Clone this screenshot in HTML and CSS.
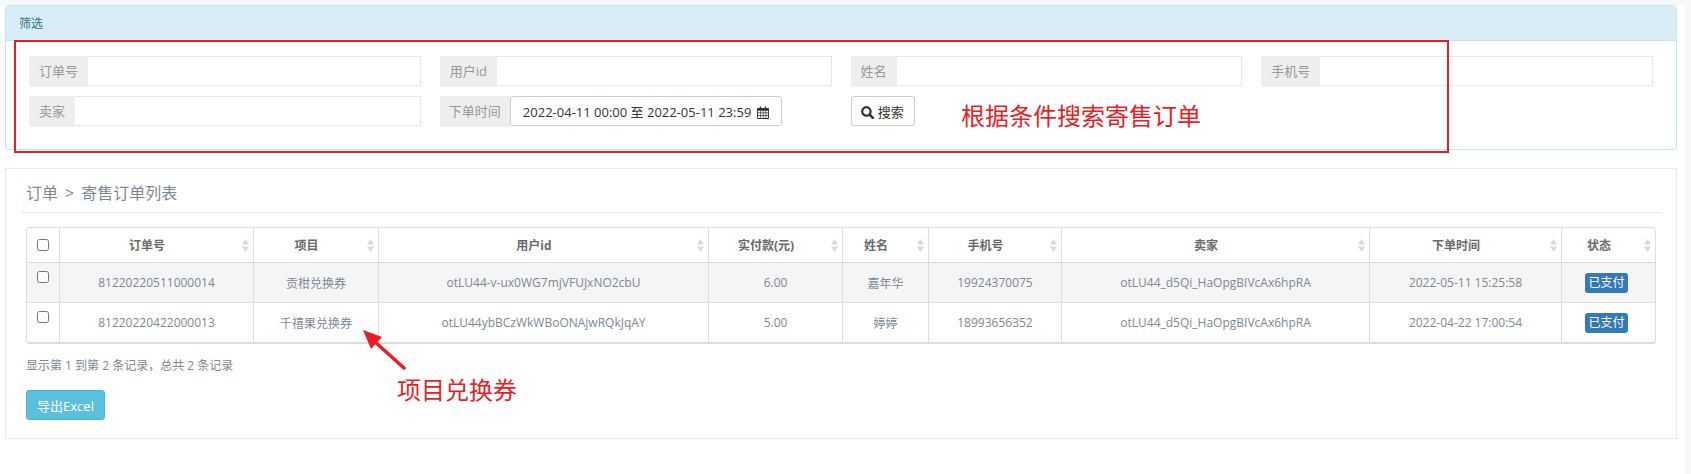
FILE: index.html
```html
<!DOCTYPE html>
<html lang="zh-CN">
<head>
    <meta charset="UTF-8">
    <title>寄售订单列表</title>
    <link rel="stylesheet" href="styles.css">
</head>
<body>

<div class="page">
    <div class="filter-panel">
        <div class="filter-heading">筛选</div>
        <div class="filter-body">
            <div class="filter-grid">
                <div class="field"><span class="field-label">订单号</span><input class="field-input" type="text"></div>
                <div class="field"><span class="field-label">用户id</span><input class="field-input" type="text"></div>
                <div class="field"><span class="field-label">姓名</span><input class="field-input" type="text"></div>
                <div class="field"><span class="field-label">手机号</span><input class="field-input" type="text"></div>
                <div class="field"><span class="field-label">卖家</span><input class="field-input" type="text"></div>
                <div class="field">
                    <span class="field-label field-label-time">下单时间</span>
                    <button class="date-btn" type="button">2022-04-11 00:00 至 2022-05-11 23:59
                        <svg class="icon-calendar" viewBox="0 0 13 14"><path d="M3 0.5h1.5v2.5h-1.5zM8.5 0.5h1.5v2.5h-1.5z" fill="#333"/><path d="M1 2h11a1 1 0 0 1 1 1v10a1 1 0 0 1-1 1h-11a1 1 0 0 1-1-1v-10a1 1 0 0 1 1-1z" fill="#333"/><path d="M1 5h2.3v2h-2.3zM4 5h2.3v2h-2.3zM7 5h2.3v2h-2.3zM10 5h2v2h-2zM1 7.7h2.3v2h-2.3zM4 7.7h2.3v2h-2.3zM7 7.7h2.3v2h-2.3zM10 7.7h2v2h-2zM1 10.4h2.3v2.6h-2.3zM4 10.4h2.3v2.6h-2.3zM7 10.4h2.3v2.6h-2.3zM10 10.4h2v2.6h-2z" fill="#fff"/></svg>
                    </button>
                </div>
                <div class="field">
                    <button class="search-btn" type="button">
                        <svg class="icon-search" viewBox="0 0 13 13"><circle cx="5.4" cy="5.4" r="4.2" fill="none" stroke="#333" stroke-width="2.2"/><path d="M8.6 8.6l3.2 3.2" stroke="#333" stroke-width="2.6" stroke-linecap="round"/></svg>
                        搜索
                    </button>
                </div>
            </div>
        </div>
    </div>

    <div class="list-panel">
        <h5 class="list-title">订单<span class="title-sep">&gt;</span>寄售订单列表</h5>
        <div class="table-wrap">
            <table class="order-table">
                <thead>
                    <tr>
                        <th class="col-check"><input type="checkbox"></th>
                        <th class="col-no sortable">订单号</th>
                        <th class="col-item sortable">项目</th>
                        <th class="col-user sortable">用户id</th>
                        <th class="col-pay sortable">实付款(元)</th>
                        <th class="col-name sortable">姓名</th>
                        <th class="col-phone sortable">手机号</th>
                        <th class="col-seller sortable">卖家</th>
                        <th class="col-time sortable">下单时间</th>
                        <th class="col-status sortable">状态</th>
                    </tr>
                </thead>
                <tbody>
                    <tr class="row-odd">
                        <td class="cell-check"><input type="checkbox"></td>
                        <td>81220220511000014</td>
                        <td>贡柑兑换券</td>
                        <td>otLU44-v-ux0WG7mjVFUJxNO2cbU</td>
                        <td>6.00</td>
                        <td>嘉年华</td>
                        <td>19924370075</td>
                        <td>otLU44_d5Qi_HaOpgBIVcAx6hpRA</td>
                        <td>2022-05-11 15:25:58</td>
                        <td><span class="status-label">已支付</span></td>
                    </tr>
                    <tr>
                        <td class="cell-check"><input type="checkbox"></td>
                        <td>81220220422000013</td>
                        <td>千禧果兑换券</td>
                        <td>otLU44ybBCzWkWBoONAjwRQkJqAY</td>
                        <td>5.00</td>
                        <td>婷婷</td>
                        <td>18993656352</td>
                        <td>otLU44_d5Qi_HaOpgBIVcAx6hpRA</td>
                        <td>2022-04-22 17:00:54</td>
                        <td><span class="status-label">已支付</span></td>
                    </tr>
                </tbody>
            </table>
        </div>
        <div class="pagination-info">显示第 1 到第 2 条记录，总共 2 条记录</div>
        <button class="export-btn" type="button">导出Excel</button>
    </div>
</div>

<!-- red notes drawn over the screenshot -->
<div class="note-box"></div>
<div class="note note-search">根据条件搜索寄售订单</div>
<div class="note note-item">项目兑换券</div>
<svg class="note-arrow" viewBox="0 0 50 46">
    <path d="M42 39L12 12" stroke="#ed1c24" stroke-width="3.5" stroke-linecap="round"/>
    <path d="M1 1L20 8L9 20z" fill="#ed1c24"/>
</svg>

</body>
</html>
```

FILE: styles.css
```css
html, body {
    margin: 0;
    height: 100%;
    overflow: hidden;
    background-color: #fff;
}

body {
    font-family: "Open Sans", "Noto Sans CJK SC", sans-serif;
    font-size: 13px;
    color: #676a6c;
    position: relative;
}

.page {
    height: 100%;
    box-sizing: border-box;
    border-top: 5px solid #f7f7f7;
    border-right: 5px solid #f7f7f7;
    padding: 0 9px 0 5px;
}

/* filter panel */
.filter-panel {
    height: 145px;
    box-sizing: border-box;
    border: 1px solid #bce8f1;
    border-radius: 4px;
    margin-bottom: 18px;
}

.filter-heading {
    height: 35px;
    line-height: 36px;
    box-sizing: border-box;
    padding-left: 13px;
    font-size: 12px;
    color: #31708f;
    background-color: #d9edf7;
    border-bottom: 1px solid #bce8f1;
}

.filter-body {
    padding: 15px 23px 0;
}

.filter-grid {
    display: grid;
    grid-template-columns: repeat(4, 1fr);
    column-gap: 19px;
    row-gap: 9px;
}

.field {
    display: flex;
    height: 31px;
}

.field-label {
    padding: 0 10px;
    line-height: 31px;
    color: #999;
    background-color: #eee;
    white-space: nowrap;
}

.field-label-time {
    padding: 0 9px;
}

.field-input {
    flex: 1;
    min-width: 0;
    height: 30px;
    box-sizing: border-box;
    padding: 0 8px;
    border: 1px solid #e5e6e7;
    border-left: none;
    background-color: #fff;
    outline: none;
}

.date-btn,
.search-btn {
    height: 30px;
    box-sizing: border-box;
    padding: 0;
    background-color: #fff;
    border: 1px solid #ccc;
    border-radius: 3px;
    font-family: inherit;
    font-size: 13px;
    color: #333;
    white-space: nowrap;
}

.date-btn {
    width: 272px;
}

.search-btn {
    width: 64px;
}

.icon-calendar {
    width: 12px;
    height: 13px;
    margin-left: 2px;
    vertical-align: -2px;
}

.icon-search {
    width: 13px;
    height: 13px;
    vertical-align: -2px;
}

/* order list */
.list-panel {
    height: 271px;
    box-sizing: border-box;
    border: 1px solid #e7eaec;
    padding: 0 15px 0 15px;
}

.list-title {
    margin: 0 0 14px;
    height: 43px;
    line-height: 48px;
    padding-left: 5px;
    font-size: 16px;
    font-weight: normal;
    color: #7b8896;
    border-bottom: 1px solid #e7eaec;
}

.title-sep {
    margin: 0 7px;
}

.table-wrap {
    width: 1630px;
    margin-left: 5px;
    box-sizing: border-box;
    border: 1px solid #ddd;
    border-bottom-width: 2px;
    border-radius: 4px;
    overflow: hidden;
}

.order-table {
    width: 100%;
    table-layout: fixed;
    border-collapse: collapse;
}

.order-table th,
.order-table td {
    padding: 0;
    text-align: center;
    border-left: 1px solid #ddd;
    white-space: nowrap;
}

.order-table th:first-child,
.order-table td:first-child {
    border-left: none;
}

.order-table th {
    height: 34px;
    font-size: 12px;
    font-weight: bold;
    color: #676a6c;
}

.order-table td {
    height: 39px;
    font-size: 12px;
    color: #7b8896;
    border-top: 1px solid #ddd;
}

.order-table input[type="checkbox"] {
    width: 12px;
    height: 12px;
    margin: 0;
}

.order-table .col-check input[type="checkbox"] {
    margin-top: 3px;
}

.order-table .cell-check {
    vertical-align: top;
    padding-top: 7px;
    height: 32px;
}

.row-odd td {
    background-color: #f5f5f5;
}

.col-check { width: 32px; }
.col-no { width: 194px; }
.col-item { width: 125px; }
.col-user { width: 330px; }
.col-pay { width: 134px; }
.col-name { width: 86px; }
.col-phone { width: 133px; }
.col-seller { width: 308px; }
.col-time { width: 192px; }

/* up and down triangles for the sort columns */
.sortable {
    padding-right: 19px !important;
    box-sizing: border-box;
    background-repeat: no-repeat;
    background-position: right 4px center;
    background-size: 7px 13px;
    background-image: url("data:image/svg+xml,%3Csvg xmlns='http://www.w3.org/2000/svg' viewBox='0 0 7 13'%3E%3Cpath d='M3.5 0L7 5.5H0zM3.5 13L0 7.5h7z' fill='%23d8d8d8'/%3E%3C/svg%3E");
}

.status-label {
    display: inline-block;
    width: 43px;
    height: 20px;
    margin-right: 4px;
    line-height: 19px;
    font-size: 12px;
    color: #fff;
    background-color: #337ab7;
    border-radius: 3px;
}

.pagination-info {
    margin: 13px 0 0 5px;
    height: 17px;
    line-height: 17px;
    font-size: 12px;
    color: #7b8896;
}

.export-btn {
    display: block;
    width: 79px;
    height: 30px;
    margin: 16px 0 0 5px;
    padding: 0;
    color: #fff;
    font-family: inherit;
    font-size: 13px;
    background-color: #5bc0de;
    border: 1px solid #46b8da;
    border-radius: 3px;
}

/* notes */
.note-box {
    position: absolute;
    left: 14px;
    top: 40px;
    width: 1435px;
    height: 113px;
    box-sizing: border-box;
    border: 2px solid #ed1c24;
}

.note {
    position: absolute;
    font-size: 24px;
    line-height: 32px;
    color: #ed1c24;
    white-space: nowrap;
}

.note-search {
    left: 961px;
    top: 100px;
}

.note-item {
    left: 397px;
    top: 374px;
}

.note-arrow {
    position: absolute;
    left: 362px;
    top: 329px;
    width: 50px;
    height: 46px;
}
```
